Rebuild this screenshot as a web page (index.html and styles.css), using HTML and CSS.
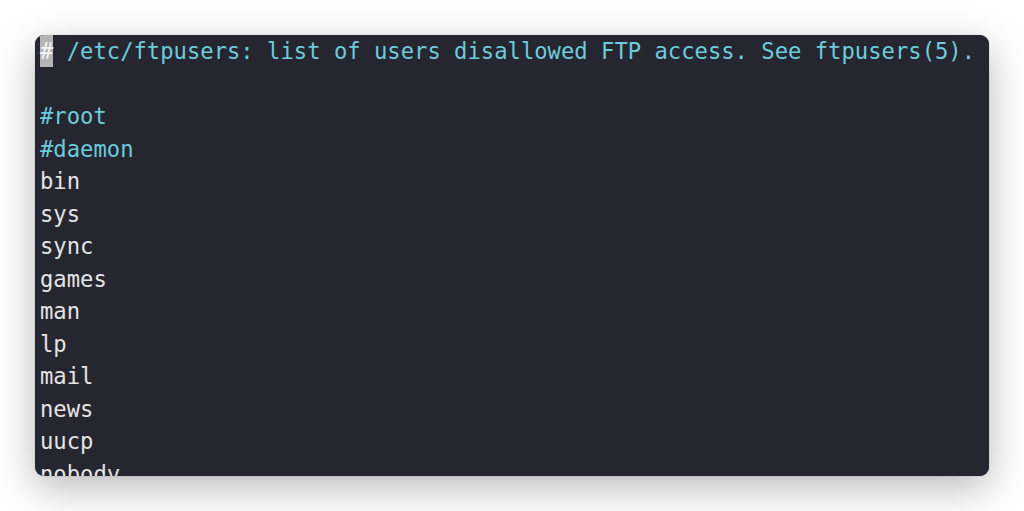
FILE: index.html
```html
<!DOCTYPE html>
<html>
<head>
<meta charset="utf-8">
<link rel="stylesheet" href="styles.css">
</head>
<body>
<div class="term">
<pre class="code"><span class="cmt"><span class="cursor">#</span> /etc/ftpusers: list of users disallowed FTP access. See ftpusers(5).</span>

<span class="cmt">#root</span>
<span class="cmt">#daemon</span>
bin
sys
sync
games
man
lp
mail
news
uucp
nobody
</pre>
</div>
</body>
</html>
```
FILE: styles.css
```css
html, body {
  margin: 0;
  background: #ffffff;
}
body {
  padding: 35px 35px 0 35px;
  height: 511px;
  box-sizing: border-box;
  overflow: hidden;
}
.term {
  width: 954px;
  height: 441px;
  background: #262630;
  border-radius: 9px;
  box-shadow: 0 12px 40px rgba(0, 0, 0, 0.28), 0 0 1px rgba(0, 0, 0, 0.5);
  overflow: hidden;
  padding: 0 5px;
  box-sizing: border-box;
}
.code {
  margin: 0;
  font-family: "DejaVu Sans Mono", monospace;
  font-size: 22.2px;
  line-height: 32.5px;
  color: #e4e4e4;
}
.cmt {
  color: #6ccbdc;
}
.cursor {
  background: #b4b4b4;
  color: #f4f4f4;
  display: inline-block;
  line-height: 32px;
}
```
